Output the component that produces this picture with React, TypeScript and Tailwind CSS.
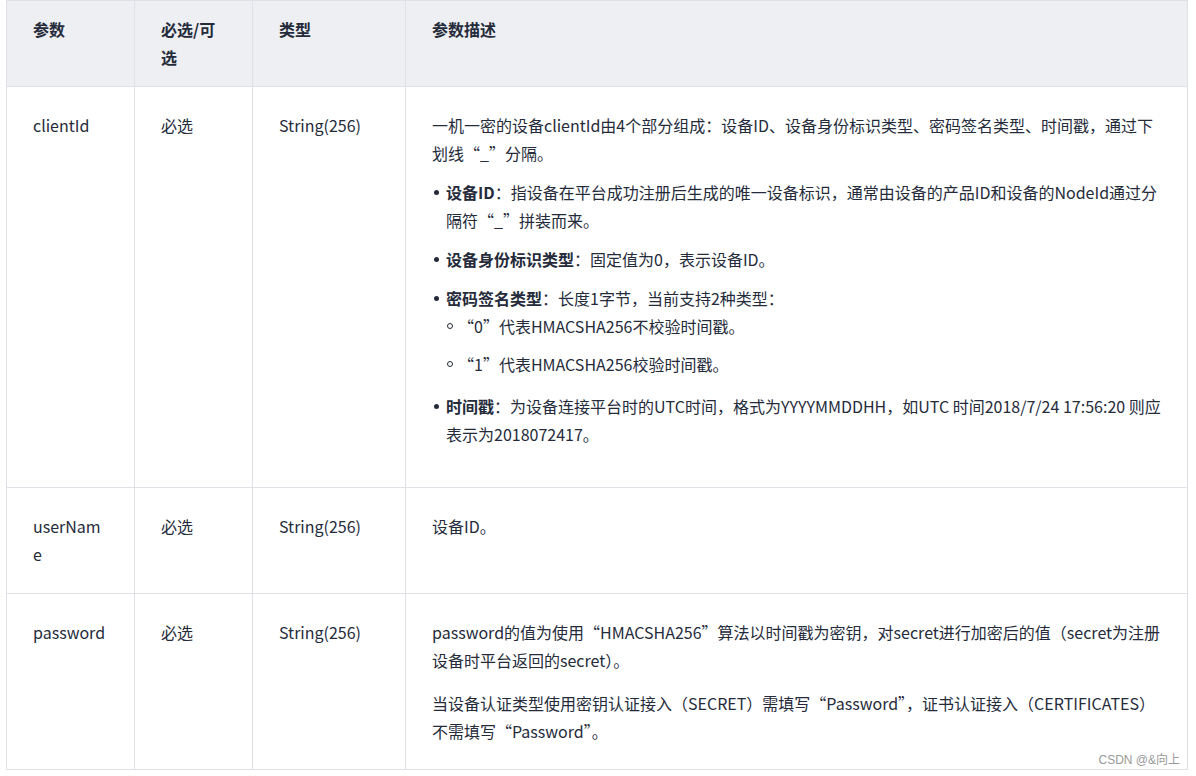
export default function App() {
  const td = "border border-[#dfe1e6] align-top px-[26px] pt-[24px] pb-[24px]";
  const th = "border border-[#dfe1e6] align-top px-[26px] pt-[14px] pb-[14px] text-left font-bold";
  const li = "relative pl-[14px] mt-[11px] before:content-[''] before:absolute before:left-[2px] before:top-[12px] before:w-[5px] before:h-[5px] before:rounded-full before:bg-[#252b3a]";
  const sub = "relative pl-[12px] before:content-[''] before:absolute before:left-[1px] before:top-[11px] before:w-[6px] before:h-[6px] before:rounded-full before:border before:border-[#252b3a]";
  return (
    <div className="relative w-[1196px] h-[776px] bg-white text-[16px] leading-[28px] text-[#252b3a]" style={{ fontFamily: '"Noto Sans CJK SC", "Noto Sans", sans-serif' }}>
      <div className="pl-[6px] pr-[8px]">
        <table className="w-full border-collapse table-fixed">
          <colgroup>
            <col className="w-[128px]" />
            <col className="w-[118px]" />
            <col className="w-[153px]" />
            <col />
          </colgroup>
          <thead>
            <tr className="bg-[#eeeff3] h-[86px]">
              <th className={th}>参数</th>
              <th className={th}>必选/可选</th>
              <th className={th}>类型</th>
              <th className={th}>参数描述</th>
            </tr>
          </thead>
          <tbody>
            <tr className="h-[401px]">
              <td className={td}>clientId</td>
              <td className={td}>必选</td>
              <td className={td}>String(256)</td>
              <td className={td}>
                <p>一机一密的设备clientId由4个部分组成：设备ID、设备身份标识类型、密码签名类型、时间戳，通过下划线“_”分隔。</p>
                <ul className="mt-[3px]">
                  <li className={li}><b>设备ID</b>：指设备在平台成功注册后生成的唯一设备标识，通常由设备的产品ID和设备的NodeId通过分隔符“_”拼装而来。</li>
                  <li className={li}><b>设备身份标识类型</b>：固定值为0，表示设备ID。</li>
                  <li className={li}><b>密码签名类型</b>：长度1字节，当前支持2种类型：
                    <ul>
                      <li className={sub}>“0”代表HMACSHA256不校验时间戳。</li>
                      <li className={sub + " mt-[10px]"}>“1”代表HMACSHA256校验时间戳。</li>
                    </ul>
                  </li>
                  <li className={li + " mt-[14px]"}><b>时间戳</b>：为设备连接平台时的UTC时间，格式为YYYYMMDDHH，如UTC 时间2018/7/24 17:56:20 则应表示为2018072417。</li>
                </ul>
              </td>
            </tr>
            <tr className="h-[106px]">
              <td className={td + " break-all"}>userName</td>
              <td className={td}>必选</td>
              <td className={td}>String(256)</td>
              <td className={td}>设备ID。</td>
            </tr>
            <tr className="h-[175px]">
              <td className={td}>password</td>
              <td className={td}>必选</td>
              <td className={td}>String(256)</td>
              <td className={td}>
                <p>password的值为使用“HMACSHA256”算法以时间戳为密钥，对secret进行加密后的值（secret为注册设备时平台返回的secret）。</p>
                <p className="mt-[15px]">当设备认证类型使用密钥认证接入（SECRET）需填写“Password”，证书认证接入（CERTIFICATES）不需填写“Password”。</p>
              </td>
            </tr>
          </tbody>
        </table>
      </div>
      <div className="absolute right-[16px] top-[752px] text-[12px] leading-[16px] text-[#999]" style={{ fontFamily: '"Liberation Sans", "Noto Sans CJK SC", sans-serif' }}>CSDN @&amp;向上</div>
    </div>
  );
}
